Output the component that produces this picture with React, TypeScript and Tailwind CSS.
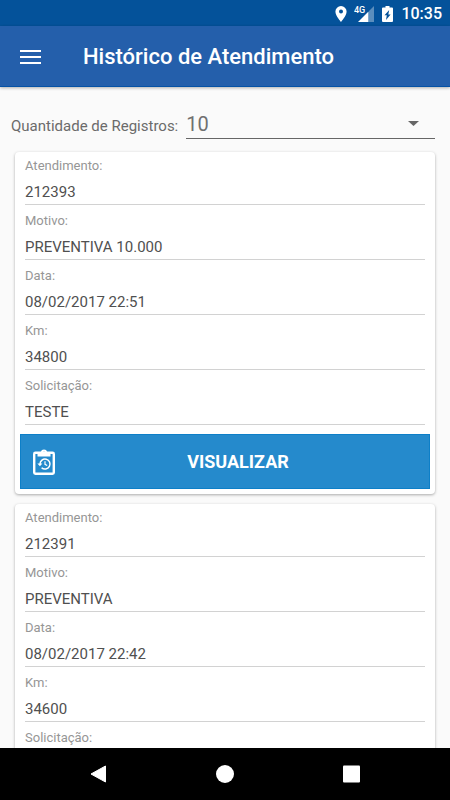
import { useId, useState } from "react";

type Service = {
  id: string;
  motivo: string;
  data: string;
  km: string;
  solicitacao: string;
};

const SERVICES: Service[] = [
  { id: "212393", motivo: "PREVENTIVA 10.000", data: "08/02/2017 22:51", km: "34800", solicitacao: "TESTE" },
  { id: "212391", motivo: "PREVENTIVA", data: "08/02/2017 22:42", km: "34600", solicitacao: "TESTE" },
];

function StatusBar() {
  return (
    <div className="flex h-[26px] shrink-0 items-center justify-end bg-[#04529a] pt-px pr-2 text-white">
      <svg className="mr-[7px] h-4 w-3" viewBox="0 0 12 16" fill="currentColor" aria-hidden="true">
        <path
          fillRule="evenodd"
          d="M6 0a5.6 5.6 0 0 0-5.6 5.6C.4 9.8 6 16 6 16s5.600-6.200 5.600-10.400A5.600 5.600 0 0 0 6 0Zm0 3.600a2 2 0 1 1 0 4 2 2 0 0 1 0-4Z"
        />
      </svg>
      <svg className="mr-2 h-4 w-5" viewBox="0 0 20 16" fill="currentColor" aria-hidden="true">
        <path d="M20 0v16h-5V5Z" opacity="0.35" />
        <path d="M14.500 5.500V16H4Z" />
        <path d="M0 0h11v8H0Z" fill="#04529a" />
        <text x="0" y="7" fontSize="9" fontWeight="500" fontFamily="Roboto, sans-serif">
          4G
        </text>
      </svg>
      <svg className="mr-2 h-4 w-[11px]" viewBox="0 0 11 16" fill="currentColor" aria-hidden="true">
        <path
          fillRule="evenodd"
          d="M3.500 0h4v1.500H10a1 1 0 0 1 1 1V15a1 1 0 0 1-1 1H1a1 1 0 0 1-1-1V2.500a1 1 0 0 1 1-1h2.500ZM7.200 4 2.500 9.300h2.300L4 14l4.600-5.500H6.300Z"
        />
      </svg>
      <span className="pt-px text-base font-medium leading-5">10:35</span>
    </div>
  );
}

function Header() {
  return (
    <header className="relative z-10 flex h-[61px] shrink-0 items-center border-b border-[#0552a6] bg-[#245fab] pt-px pl-5 text-white shadow-[0_1px_3px_rgba(0,0,0,0.3)]">
      <button type="button" aria-label="Menu" className="flex w-[21px] flex-col gap-[4px]">
        <span className="h-[2px] w-full bg-white" />
        <span className="h-[2px] w-full bg-white" />
        <span className="h-[2px] w-full bg-white" />
      </button>
      <h1 className="ml-[42px] text-[22px] font-medium leading-7">Histórico de Atendimento</h1>
    </header>
  );
}

function Field({ label, value }: { label: string; value: string }) {
  const id = useId();
  return (
    <div className="flex h-[52px] flex-col border-b border-[#d2d2d2]">
      <label htmlFor={id} className="pt-[3px] text-[13px] leading-5 text-[#969696]">
        {label}
      </label>
      <input
        id={id}
        readOnly
        value={value}
        className="mt-[5px] h-[22px] w-full bg-transparent text-[15px] leading-5 text-[#505050] outline-none"
      />
    </div>
  );
}

function ClipboardHistoryIcon() {
  return (
    <svg className="h-[26px] w-[22px]" viewBox="0 0 22 26" fill="none" stroke="currentColor" aria-hidden="true">
      <rect x="1.200" y="3.700" width="19.600" height="21" rx="1.200" strokeWidth="2.400" />
      <path
        d="M4.500 3h3.300a3.300 3.300 0 0 1 6.400 0h3.300v4.500h-13ZM11 2.500a1 1 0 1 0 0 2 1 1 0 0 0 0-2Z"
        fill="currentColor"
        fillRule="evenodd"
        stroke="none"
      />
      <path d="M7 15a5 5 0 1 1 1.600 3.700" strokeWidth="1.500" />
      <path d="M4.400 14.600h5L6.900 17.300Z" fill="currentColor" stroke="none" />
      <path d="M12 12.200v3.100l2.200 1.300" strokeWidth="1.200" />
    </svg>
  );
}

function ServiceCard({ service }: { service: Service }) {
  return (
    <article className="rounded-[4px] bg-white pt-px pb-[5px] shadow-[0_1px_3px_rgba(0,0,0,0.32)]">
      <div className="flex flex-col gap-[3px] px-[10px]">
        <Field label="Atendimento:" value={service.id} />
        <Field label="Motivo:" value={service.motivo} />
        <Field label="Data:" value={service.data} />
        <Field label="Km:" value={service.km} />
        <Field label="Solicitação:" value={service.solicitacao} />
      </div>
      <div className="mt-[9px] px-[5px]">
        <button
          type="button"
          className="flex h-[55px] w-full items-center border border-[#0d7fc8] bg-[#258acc] pt-px pl-3 text-white"
        >
          <ClipboardHistoryIcon />
          <span className="flex-1 pr-[8px] text-center text-lg font-bold">VISUALIZAR</span>
        </button>
      </div>
    </article>
  );
}

function NavBar() {
  return (
    <nav className="flex h-[52px] shrink-0 items-center justify-center gap-[108px] bg-black text-white">
      <button type="button" aria-label="Voltar">
        <svg className="h-[18px] w-[18px]" viewBox="0 0 18 18" fill="currentColor" stroke="currentColor" strokeLinejoin="round">
          <path d="M15.500 1v16L1 9Z" />
        </svg>
      </button>
      <button type="button" aria-label="Início">
        <svg className="h-[18px] w-[18px]" viewBox="0 0 18 18" fill="currentColor">
          <circle cx="9" cy="9" r="9" />
        </svg>
      </button>
      <button type="button" aria-label="Recentes">
        <svg className="h-[18px] w-[18px]" viewBox="0 0 18 18" fill="currentColor">
          <rect x="1" y="0.500" width="17" height="17" rx="1" />
        </svg>
      </button>
    </nav>
  );
}

export default function App() {
  const [limit, setLimit] = useState("10");

  return (
    <div className="flex h-screen flex-col overflow-hidden bg-[#fafafa] font-[Roboto,sans-serif]">
      <StatusBar />
      <Header />
      <main className="min-h-0 flex-1 overflow-y-auto pt-[21px] pb-4 [scrollbar-width:none]">
        <div className="flex items-center pr-[15px] pl-[11px]">
          <label htmlFor="limit" className="pt-[4px] text-[15px] leading-5 text-[#6b6b6b]">
            Quantidade de Registros:
          </label>
          <div className="relative ml-2 flex-1">
            <select
              id="limit"
              value={limit}
              onChange={(e) => setLimit(e.target.value)}
              className="block h-[31px] w-full appearance-none border-b border-[#666666] bg-transparent pt-px text-xl text-[#707070] outline-none"
            >
              <option>10</option>
              <option>20</option>
              <option>50</option>
            </select>
            <svg
              className="pointer-events-none absolute top-[13px] right-4 h-[5px] w-[11px] text-[#666666]"
              viewBox="0 0 11 5"
              fill="currentColor"
              aria-hidden="true"
            >
              <path d="M0 0h11L5.500 5Z" />
            </svg>
          </div>
        </div>

        <div className="mt-[13px] flex flex-col gap-[10px] px-[15px]">
          {SERVICES.map((service) => (
            <ServiceCard key={service.id} service={service} />
          ))}
        </div>
      </main>
      <NavBar />
    </div>
  );
}
